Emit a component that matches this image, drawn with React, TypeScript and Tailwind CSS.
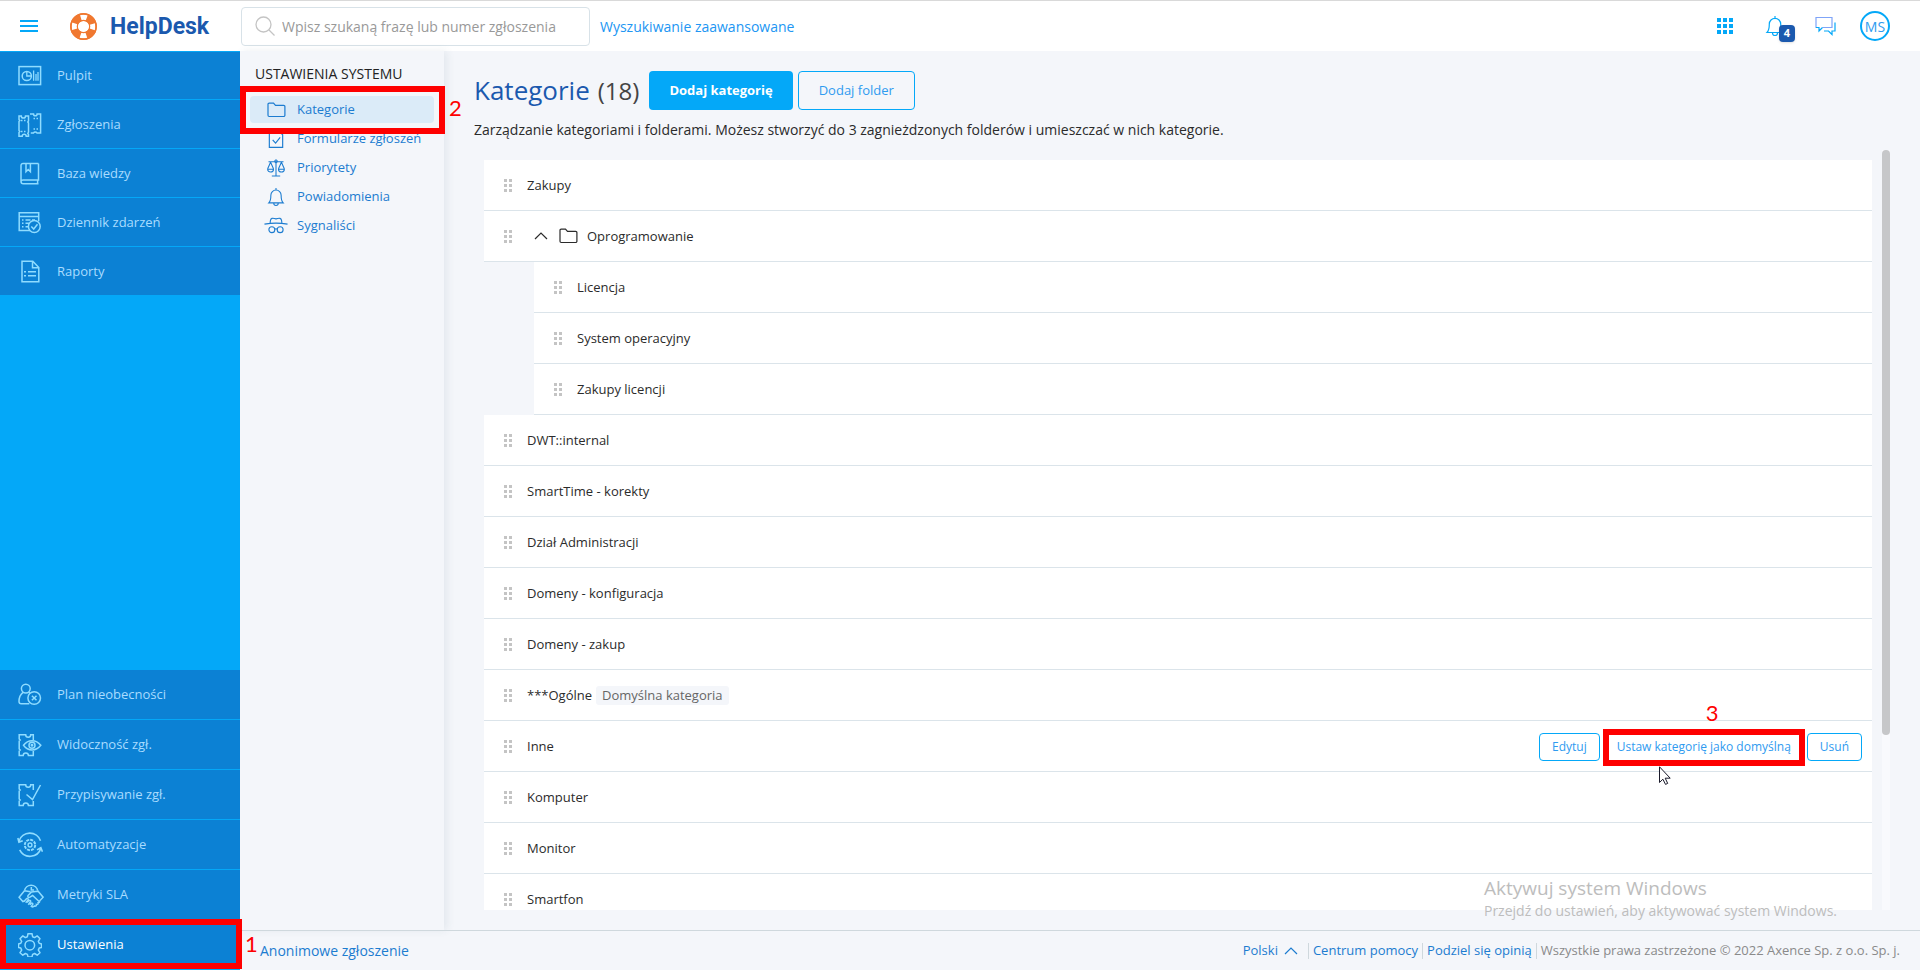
import React from "react";

const font = "font-['Open_Sans','Noto_Sans',sans-serif]";

type IconProps = { className?: string };

function Svg({ children, size = "size-6" }: { children: React.ReactNode; size?: string }) {
  return (
    <svg viewBox="0 0 24 24" className={`${size} shrink-0`} fill="none" stroke="currentColor" strokeWidth="1.500" aria-hidden="true">
      {children}
    </svg>
  );
}

const Dashboard = () => (
  <Svg>
    <rect x="1" y="2.600" width="21.600" height="18" />
    <circle cx="8.800" cy="12" r="4.600" />
    <path d="M8.800 7.400V12h4.600M15.600 6.500v10.300M18 10v6.800M20 8v8.800" strokeWidth="1.300" />
  </Svg>
);
const Tickets = () => (
  <Svg>
    <path d="M1 3h2.300a2.100 2.100 0 0 0 4.200 0h3v5l-.7 1 .7 1v9l-.7 1.500.7 1v1.700H8.200a2 2 0 0 0-4 0H1V19.500l.8-1-.8-1V8.500l.8-1L1 6.500z" />
    <path d="M3 7.500h1.500m1.500 0h1.500M3 18.500h1.500m1.500 0h1.500M12 1h3.500a1.800 1.800 0 0 0 3.600 0h3.500v19H19a2 2 0 0 0-3.500 0H12.800M15.500 5.500H17m1.500 0H20M15.500 16H17m1.500 0H20" />
  </Svg>
);
const Book = () => (
  <Svg>
    <path d="M20.500 1.500H5a2 2 0 0 0-2 2V19.500a2.300 2.300 0 0 0 2.300 2.300H20.500M20.500 1.500V18H5a2 2 0 0 0-2 1.500M19.600 18.200v3.400M8 1.700v8l2.200-2.200 2.200 2.200v-8" />
  </Svg>
);
const Journal = () => (
  <Svg>
    <path d="M12 19.500H1.200V1.800h19.500v8.500M1.200 5.500h19.500M4 9h1.500M7.500 9h5M14 9h3M4 12.300h1.500M7.500 12.300h3.500M4 15.700h1.500M7.500 15.700h2.500" />
    <circle cx="16.300" cy="15.500" r="5.900" />
    <path d="m13.300 15.500 2.400 2.500 3.800-4.800" />
  </Svg>
);
const Report = () => (
  <Svg>
    <path d="M4 1.200h10.800l6 6.300v14.300H4zM14.500 1.500v6.300h6M6 11.800h2M10 11.800h8M6 15.800h2M10 15.800h8" />
  </Svg>
);
const Absence = () => (
  <Svg>
    <circle cx="7.800" cy="5.600" r="4.400" />
    <path d="M5 9.300c-2.800 2.200-4 5.400-4 9.200 0 1.500.8 2.300 2.300 2.300h8M10.700 9.200l1.300 1" />
    <circle cx="16.200" cy="15" r="6.300" />
    <path d="m13.900 12.700 4.600 4.600m0-4.600-4.600 4.600" />
  </Svg>
);
const ticketPath = "M15.300 7V1.800h-2.600a2.500 2.500 0 0 1-5 0H1.200V6l1 1-1 1v8l1 1-1 1v4.500h4a2.600 2.600 0 0 1 5.200 0h4.900V18";
const Visibility = () => (
  <Svg>
    <path d={ticketPath} />
    <path d="M5.500 12.300c4.500-6.200 12.500-6.200 17.300 0-4.800 6.200-12.800 6.200-17.300 0z" />
    <circle cx="14" cy="12.300" r="3" />
    <circle cx="14" cy="12.300" r=".7" />
  </Svg>
);
const Assign = () => (
  <Svg>
    <path d={ticketPath} />
    <path d="m8.500 11.500 6 5L22.500 2" />
  </Svg>
);
const gear = "M10 1.500h4l.6 3 2 .9 2.600-1.700 2.800 2.800-1.700 2.600.9 2 2.300.6v3.600l-2.300.6-.9 2 1.700 2.600-2.800 2.500-2.600-1.700-2 .9-.6 2.500h-4l-.6-2.500-2-.9-2.600 1.700L2 20.500l1.700-2.600-.9-2-2.300-.6v-3.600l2.300-.6.9-2L2 6.500l2.800-2.800 2.600 1.700 2-.9z";
const Gear = () => (
  <Svg>
    <path d={gear} transform="translate(0 -.8)" strokeLinejoin="round" />
    <circle cx="11.800" cy="12.200" r="4.800" />
  </Svg>
);
const Automation = () => (
  <Svg size="-ml-px size-[26px]">
    <path d="M1.800 8.300A10.500 10.500 0 0 1 21.700 8M.8 5.500l1 3.800L5.300 8M22 15A10.500 10.500 0 0 1 2.500 16.500M23.500 18.200 22 14.500 18.500 16.500" />
    <circle cx="12" cy="12" r="4.800" strokeDasharray="2.800 .9" strokeWidth="1.800" />
    <circle cx="12" cy="12" r="1.800" strokeWidth="1.300" />
  </Svg>
);
const Sla = () => (
  <Svg size="size-[26px]">
    <g strokeWidth="1.400">
      <path d="M6 8a6.200 6.200 0 0 1 12.200 0M12.300 4.500v2.800h2.500" />
      <path d="M6 8 1 14l3.500 4 1.500-.5M18.200 8l5 6-3.700 4-6-5.500-2.500 1.500c-1.500.8-2.500-.5-1.500-1.800l3-3 5.700-.7M6 8l5.500 1" />
      <path d="M5.500 18l2.300-2.500c1-.9 2.200.2 1.300 1.300l-2 2.300M8.300 19l1.700-1.800c1-.9 2.200.2 1.300 1.300L9.500 21M11 21l1-1.200c1-.9 2.200.2 1.300 1.300l-1 1.400c1 .7 2 .5 2.700-.3 1.500.3 2.300-.4 2-1.500 1.300.2 1.900-.6 1.600-1.600 1 0 1.400-.6 1.300-1.300" />
    </g>
  </Svg>
);

const FolderIcon = ({ className }: IconProps) => (
  <svg viewBox="0 0 19 16" className={className} fill="none" stroke="currentColor" strokeWidth="1.200" aria-hidden="true">
    <path d="M2.200 1.100h4.300l2 2.300h8.200a1.200 1.200 0 0 1 1.200 1.200v8.700a1.200 1.200 0 0 1-1.200 1.200H2.200A1.200 1.200 0 0 1 1 13.300v-11a1.200 1.200 0 0 1 1.200-1.200z" />
  </svg>
);
const FormIcon = () => (
  <Svg size="size-5">
    <path d="M4 22V2h11l5 5v15zM8 13l3.500 4L17 10" strokeWidth="1.400" />
  </Svg>
);
const ScaleIcon = () => (
  <Svg size="size-5">
    <path d="M12 3v18M7 21.500h10M3 4.500h18M5.500 5 2 13M5.500 5 9 13M18.500 5 15 13M18.500 5l3.500 8M2 13.500h7c0 4.500-7 4.500-7 0zM15 13.500h7c0 4.500-7 4.500-7 0z" strokeWidth="1.300" />
    <circle cx="12" cy="4" r="1.700" strokeWidth="1.200" />
  </Svg>
);
const BellIcon = ({ className }: IconProps) => (
  <svg viewBox="0 0 20 22" className={className} fill="none" stroke="currentColor" strokeWidth="1.200" aria-hidden="true">
    <path d="M10 1v2M2 17.500c2-2 2.300-3.500 2.300-8.500a5.700 5.700 0 0 1 11.400 0c0 5 .3 6.500 2.300 8.500zM7.500 18a2.500 2.500 0 0 0 5 0" />
  </svg>
);
const SpyIcon = () => (
  <svg viewBox="0 0 26 20" className="h-5 w-6 shrink-0" fill="none" stroke="currentColor" strokeWidth="1.200" aria-hidden="true">
    <path d="M.5 8c7-1.300 18-1.300 25 0M6.500 7.300 7 4c.5-2.500 2-3 6-1.700 4-1.300 5.500-.8 6 1.700l.5 3.300M11.500 13.500q1.500-1 3 0" />
    <circle cx="8.500" cy="14" r="3.200" />
    <circle cx="17.500" cy="14" r="3.200" />
  </svg>
);
const Chevron = ({ className }: IconProps) => (
  <svg viewBox="0 0 14 8" className={className} fill="none" stroke="currentColor" strokeWidth="1.200" aria-hidden="true">
    <path d="m1 7 6-6 6 6" />
  </svg>
);

const topNav = [
  { label: "Pulpit", icon: <Dashboard /> },
  { label: "Zgłoszenia", icon: <Tickets /> },
  { label: "Baza wiedzy", icon: <Book /> },
  { label: "Dziennik zdarzeń", icon: <Journal /> },
  { label: "Raporty", icon: <Report /> },
];
const bottomNav = [
  { label: "Plan nieobecności", icon: <Absence /> },
  { label: "Widoczność zgł.", icon: <Visibility /> },
  { label: "Przypisywanie zgł.", icon: <Assign /> },
  { label: "Automatyzacje", icon: <Automation /> },
  { label: "Metryki SLA", icon: <Sla /> },
  { label: "Ustawienia", icon: <Gear />, active: true },
];
const settings = [
  { label: "Kategorie", icon: <FolderIcon className="h-4 w-[19px]" />, active: true },
  { label: "Formularze zgłoszeń", icon: <FormIcon /> },
  { label: "Priorytety", icon: <ScaleIcon /> },
  { label: "Powiadomienia", icon: <BellIcon className="h-5 w-[18px]" /> },
  { label: "Sygnaliści", icon: <SpyIcon /> },
];
type Row = { name: string; folder?: boolean; nested?: boolean; isDefault?: boolean; hovered?: boolean };
const rows: Row[] = [
  { name: "Zakupy" },
  { name: "Oprogramowanie", folder: true },
  { name: "Licencja", nested: true },
  { name: "System operacyjny", nested: true },
  { name: "Zakupy licencji", nested: true },
  { name: "DWT::internal" },
  { name: "SmartTime - korekty" },
  { name: "Dział Administracji" },
  { name: "Domeny - konfiguracja" },
  { name: "Domeny - zakup" },
  { name: "***Ogólne", isDefault: true },
  { name: "Inne", hovered: true },
  { name: "Komputer" },
  { name: "Monitor" },
  { name: "Smartfon" },
];

function Handle() {
  return (
    <span className="grid shrink-0 grid-cols-2 gap-[2px]" aria-hidden="true">
      {[0, 1, 2, 3, 4, 5].map((i) => (
        <i key={i} className="size-[3px] bg-[#c4c4c4]" />
      ))}
    </span>
  );
}

function NavList({ items, tall }: { items: { label: string; icon: React.ReactNode; active?: boolean }[]; tall?: boolean }) {
  return (
    <ul>
      {items.map((it, i) => (
        <li key={it.label} className="relative">
          <a
            href="#"
            className={`flex items-center border-b border-[#04a8f8] bg-[#0c81d4] pl-[18px] text-[13px] ${
              tall ? "h-[50px]" : i === 0 ? "h-[49px] border-t" : "h-[49px] pt-[2px]"
            } ${it.active ? "text-white" : "text-[#a9dcff]"}`}
          >
            <span className="flex w-[39px] shrink-0 items-center text-[#8fdcff]">{it.icon}</span>
            {it.label}
          </a>
          {it.active && (
            <>
              <span className="pointer-events-none absolute -top-px -right-[2px] bottom-px left-0 border-6 border-[#fe0000]" />
              <span className="absolute top-3 left-[245px] font-['Lato',sans-serif] text-[22px] leading-6 text-[#fe0000]">1</span>
            </>
          )}
        </li>
      ))}
    </ul>
  );
}

const smallBtn = "h-7 rounded-[4px] border border-[#04a8f8] px-3 text-[12px] text-[#2f9bf0] bg-white whitespace-nowrap";

export default function App() {
  return (
    <div className={`${font} relative flex h-screen flex-col overflow-hidden bg-[#f4f6fa] text-[#2b2b2b]`}>
      <header className="flex h-[51px] shrink-0 items-center border-t border-[#d9d9d9] bg-white">
        <div className="flex w-[241px] shrink-0 items-center">
          <button aria-label="Menu" className="ml-5 flex w-[18px] flex-col gap-[3px]">
            <i className="h-[2px] bg-[#04a8f8]" />
            <i className="h-[2px] bg-[#04a8f8]" />
            <i className="h-[2px] bg-[#04a8f8]" />
          </button>
          <svg viewBox="0 0 27 27" className="ml-8 size-[27px]" aria-hidden="true">
            <circle cx="13.500" cy="13.500" r="9.600" fill="none" stroke="#f07830" strokeWidth="7.600" />
            <circle cx="13.500" cy="13.500" r="9.200" fill="none" stroke="#fff" strokeWidth="5.400" strokeDasharray="6 8.450" strokeDashoffset="3" />
            <circle cx="13.500" cy="13.500" r="12.600" fill="none" stroke="#f07830" strokeWidth="1.500" />
            <circle cx="13.500" cy="13.500" r="6.200" fill="none" stroke="#f07830" strokeWidth="1.200" />
          </svg>
          <span className="ml-[13px] pt-[2px] font-['Roboto',sans-serif] text-[23px] leading-7 font-bold text-[#1b59ae]">HelpDesk</span>
        </div>
        <label className="flex h-[39px] w-[349px] shrink-0 items-center rounded-[4px] border border-[#d8e2e8] pl-[13px]">
          <svg viewBox="0 0 20 20" className="size-5 shrink-0" fill="none" stroke="#c4c4c4" strokeWidth="1.300" aria-hidden="true">
            <circle cx="8.500" cy="8.500" r="7.500" />
            <path d="m14 14 5.500 5.500" />
          </svg>
          <input
            aria-label="Szukaj"
            placeholder="Wpisz szukaną frazę lub numer zgłoszenia"
            className="ml-[7px] w-full bg-transparent text-[14px] outline-none placeholder:text-[#999999]"
          />
        </label>
        <a href="#" className="ml-[10px] text-[14px] text-[#2196f3]">Wyszukiwanie zaawansowane</a>
        <div className="ml-auto flex items-center pr-[30px] text-[#04a8f8]">
          <button aria-label="Aplikacje" className="grid grid-cols-3 gap-[2px]">
            {Array.from({ length: 9 }, (_, i) => (
              <i key={i} className="size-1 bg-[#04a8f8]" />
            ))}
          </button>
          <button aria-label="Powiadomienia" className="relative ml-8 w-7">
            <BellIcon className="h-[22px] w-5" />
            <span className="absolute top-[10px] left-[14px] flex h-[17px] w-4 items-center justify-center rounded-[4px] bg-[#1b59ae] text-[11px] font-bold text-white shadow">4</span>
          </button>
          <button aria-label="Wiadomości" className="ml-[22px]">
            <svg viewBox="0 0 21 20" className="h-5 w-[21px]" fill="none" stroke="currentColor" strokeWidth="1.200" aria-hidden="true">
              <path d="M4 11.500H1v-10h16v10H7.500" stroke="#7fa4f8" />
              <path d="M20 6.500V15h-3v3.500L13.500 15H9M1 11.500h3V15l3.500-3.500" />
            </svg>
          </button>
          <button className="ml-6 flex size-[30px] items-center justify-center rounded-full border-2 border-[#04a8f8] text-[14px] text-[#2f9bf0]">MS</button>
        </div>
      </header>

      <div className="flex min-h-0 flex-1">
        <nav className="relative z-10 flex w-60 shrink-0 flex-col justify-between bg-[#04a8f8]">
          <NavList items={topNav} />
          <NavList items={bottomNav} tall />
        </nav>

        <div className="flex min-w-0 flex-1 flex-col">
          <div className="flex min-h-0 flex-1">
            <aside className="w-[204px] shrink-0 pt-3 shadow-[3px_0_8px_rgba(60,90,110,0.09)]">
              <h2 className="pl-[15px] text-[14px] leading-[22px] font-medium text-[#222]">USTAWIENIA SYSTEMU</h2>
              <ul className="mt-[11px] px-[10px]">
                {settings.map((s) => (
                  <li key={s.label} className="relative mb-[2px]">
                    <a href="#" className={`flex h-[27px] items-center rounded-[4px] text-[13px] text-[#1c7cd0] ${s.active ? "bg-[#dbebf8]" : ""}`}>
                      <span className="flex w-[52px] shrink-0 justify-center">{s.icon}</span>
                      <span className="-ml-[5px] whitespace-nowrap">{s.label}</span>
                    </a>
                    {s.active && (
                      <>
                        <span className="pointer-events-none absolute -top-[10px] -right-[11px] -bottom-[11px] -left-[10px] z-10 border-6 border-[#fe0000]" />
                        <span className="absolute top-0 left-[199px] font-['Lato',sans-serif] text-[22px] leading-6 text-[#fe0000]">2</span>
                      </>
                    )}
                  </li>
                ))}
              </ul>
            </aside>

            <main className="flex min-w-0 flex-1 flex-col px-[30px] py-5">
              <div className="flex h-[39px] items-center">
                <h1 className="text-[26px] text-[#1b59ae]">Kategorie</h1>
                <span className="ml-2 text-[24px] text-[#444]">(18)</span>
                <button className="ml-[10px] h-[39px] rounded-[4px] bg-[#04a8f8] px-5 text-[13px] font-bold text-white">Dodaj kategorię</button>
                <button className="ml-[5px] h-[39px] rounded-[4px] border border-[#04a8f8] px-5 text-[13px] text-[#2f9bf0]">Dodaj folder</button>
              </div>
              <p className="mt-[9px] text-[14px] leading-[22px]">
                Zarządzanie kategoriami i folderami. Możesz stworzyć do 3 zagnieżdzonych folderów i umieszczać w nich kategorie.
              </p>
              <div className="mt-[9px] flex min-h-0 flex-1">
                <ul className="mx-[10px] min-w-0 flex-1 overflow-hidden pt-[10px]">
                  {rows.map((r) => (
                    <li
                      key={r.name}
                      className={`flex h-[51px] items-center border-b border-[#dbe4ea] bg-white pr-[10px] pl-5 text-[13px] ${r.nested ? "ml-[50px]" : ""}`}
                    >
                      <Handle />
                      {r.folder && (
                        <>
                          <Chevron className="ml-[22px] h-2 w-[14px]" />
                          <FolderIcon className="ml-[11px] h-4 w-[19px]" />
                        </>
                      )}
                      <span className={r.folder ? "ml-[9px] pt-[2px]" : "ml-[15px] pt-[2px]"}>{r.name}</span>
                      {r.isDefault && <span className="ml-1 rounded-[3px] bg-[#f4f6fa] px-[6px] leading-[19px] text-[#666]">Domyślna kategoria</span>}
                      {r.hovered && (
                        <div className="ml-auto flex items-center pt-[2px]">
                          <button className={smallBtn}>Edytuj</button>
                          <div className="relative mr-[2px] ml-[3px]">
                            <button className="block h-[37px] border-6 border-[#fe0000] bg-white px-2 text-[12px] whitespace-nowrap text-[#2f9bf0]">
                              Ustaw kategorię jako domyślną
                            </button>
                            <span className="absolute -top-7 left-[103px] font-['Lato',sans-serif] text-[22px] leading-6 text-[#fe0000]">3</span>
                            <svg viewBox="0 0 12 19" className="absolute top-[37px] left-14 h-[19px] w-3" fill="#fff" stroke="#1a1a2a" strokeWidth="1" aria-hidden="true">
                              <path d="M.5.8v15.700l3.400-3.300 2.600 5.200 2.200-1-2.500-5.200h5z" />
                            </svg>
                          </div>
                          <button className={smallBtn}>Usuń</button>
                        </div>
                      )}
                    </li>
                  ))}
                </ul>
                <div className="w-2 bg-[#f9fafd]">
                  <div className="h-[77%] rounded-full bg-[#c6c7c9]" />
                </div>
              </div>
            </main>
          </div>

          <footer className="flex h-10 shrink-0 items-center border-t border-[#cfd8dd] px-5 text-[13px] text-[#1c7cd0]">
            <a href="#" className="text-[14px]">Anonimowe zgłoszenie</a>
            <button className="ml-auto flex items-center">
              Polski
              <Chevron className="ml-[6px] h-2 w-[14px]" />
            </button>
            <i className="mr-1 ml-[10px] h-4 w-px bg-[#cfd8dd]" />
            <a href="#">Centrum pomocy</a>
            <i className="mx-1 h-4 w-px bg-[#cfd8dd]" />
            <a href="#">Podziel się opinią</a>
            <i className="mx-1 h-4 w-px bg-[#cfd8dd]" />
            <span className="text-[#8a8a8a]">Wszystkie prawa zastrzeżone © 2022 Axence Sp. z o.o. Sp. j.</span>
          </footer>
        </div>
      </div>

      <div className="pointer-events-none absolute right-[83px] bottom-12 text-[#bdbdbd]">
        <p className="text-[19px] leading-6">Aktywuj system Windows</p>
        <p className="text-[14px] leading-[22px]">Przejdź do ustawień, aby aktywować system Windows.</p>
      </div>
    </div>
  );
}
